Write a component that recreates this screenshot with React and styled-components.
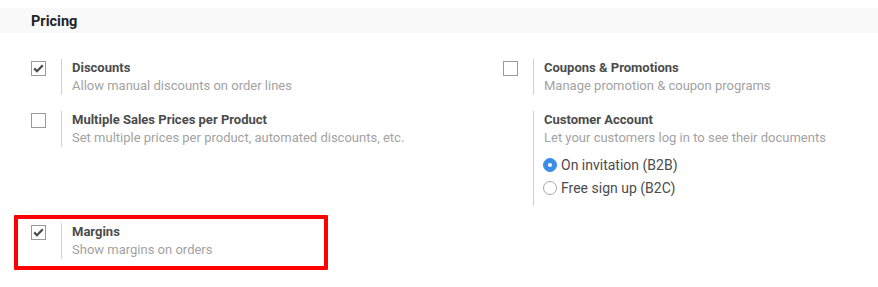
import styled, { createGlobalStyle } from 'styled-components';

const GlobalStyle = createGlobalStyle`
  body {
    margin: 0;
    background: #fff;
    font-family: Roboto, "Liberation Sans", Arial, sans-serif;
    -webkit-font-smoothing: antialiased;
  }
`;

const Page = styled.div`
  padding-top: 8px;
  padding-bottom: 24px;
`;

const SectionTitle = styled.h2`
  margin: 0;
  height: 25px;
  line-height: 27px;
  padding-left: 31px;
  background: #f9f9f9;
  color: #212529;
  font-size: 14.5px;
  font-weight: 700;
`;

const Grid = styled.div`
  display: grid;
  grid-template-columns: 472px 1fr;
  row-gap: 16px;
  margin-top: 26px;
  padding-left: 16px;
`;

const SettingBox = styled.div`
  display: flex;
  align-items: flex-start;
  ${({ $highlight }) =>
    $highlight &&
    `
    width: 306px;
    border: 4px solid #ff0000;
    border-radius: 1px;
    padding: 4px 0 7px;
    margin: -7px 0 0 -2px;
  `}
`;

const LeftPane = styled.div`
  width: ${({ $w }) => $w || 45}px;
  flex: none;
  padding-top: 2px;
`;

const RightPane = styled.div`
  border-left: 1px solid #cfcfcf;
  padding-left: 10px;
  padding-bottom: ${({ $pb }) => $pb || 0}px;
`;

const Title = styled.div`
  font-size: 13px;
  line-height: 18px;
  font-weight: 700;
  color: #4c4c4c;
`;

const Description = styled.div`
  font-size: 13px;
  line-height: 18px;
  color: #a3a3a3;
`;

const Box = styled.span`
  display: block;
  box-sizing: border-box;
  width: 15px;
  height: 15px;
  margin-left: ${({ $ml }) => $ml || 15}px;
  border: 1px solid #9a9a9a;
  background: #fff;
  position: relative;

  svg {
    position: absolute;
    left: 1px;
    top: 2px;
  }
`;

const RadioList = styled.div`
  margin-top: 6px;
  margin-left: -1px;
`;

const RadioRow = styled.label`
  display: flex;
  align-items: center;
  gap: 4px;
  height: 23px;
  font-size: 14px;
  color: #4c4c4c;
`;

const RadioDot = styled.span`
  box-sizing: border-box;
  width: 14px;
  height: 14px;
  border-radius: 50%;
  flex: none;
  border: 1px solid ${({ $on }) => ($on ? '#3a8ee8' : '#a8a8a8')};
  background: ${({ $on }) => ($on ? '#3a8ee8' : '#fff')};
  display: flex;
  align-items: center;
  justify-content: center;

  &::after {
    content: '';
    width: 4px;
    height: 4px;
    border-radius: 50%;
    background: #fff;
    display: ${({ $on }) => ($on ? 'block' : 'none')};
  }
`;

const Check = () => (
  <svg width="11" height="9" viewBox="0 0 11 9">
    <path d="M1.2 4.4 L4 7.2 L9.8 1.2" fill="none" stroke="#4a4a4a" strokeWidth="2.2" />
  </svg>
);

const Checkbox = ({ checked, ml }) => <Box $ml={ml}>{checked && <Check />}</Box>;

const Setting = ({ checked, title, desc, highlight, children, noBox, pb, ml, leftWidth }) => (
  <SettingBox $highlight={highlight}>
    <LeftPane $w={leftWidth}>{!noBox && <Checkbox checked={checked} ml={ml} />}</LeftPane>
    <RightPane $pb={pb}>
      <Title>{title}</Title>
      <Description>{desc}</Description>
      {children}
    </RightPane>
  </SettingBox>
);

export default function App() {
  return (
    <>
      <GlobalStyle />
      <Page>
        <SectionTitle>Pricing</SectionTitle>
        <Grid>
          <Setting checked title="Discounts" desc="Allow manual discounts on order lines" />
          <Setting title="Coupons & Promotions" desc="Manage promotion & coupon programs" />
          <Setting
            title="Multiple Sales Prices per Product"
            desc="Set multiple prices per product, automated discounts, etc."
          />
          <Setting
            noBox
            title="Customer Account"
            desc="Let your customers log in to see their documents"
            pb={7}
          >
            <RadioList>
              <RadioRow>
                <RadioDot $on />
                On invitation (B2B)
              </RadioRow>
              <RadioRow>
                <RadioDot />
                Free sign up (B2C)
              </RadioRow>
            </RadioList>
          </Setting>
          <Setting
            highlight
            checked
            title="Margins"
            desc="Show margins on orders"
            leftWidth={43}
            ml={13}
          />
        </Grid>
      </Page>
    </>
  );
}
